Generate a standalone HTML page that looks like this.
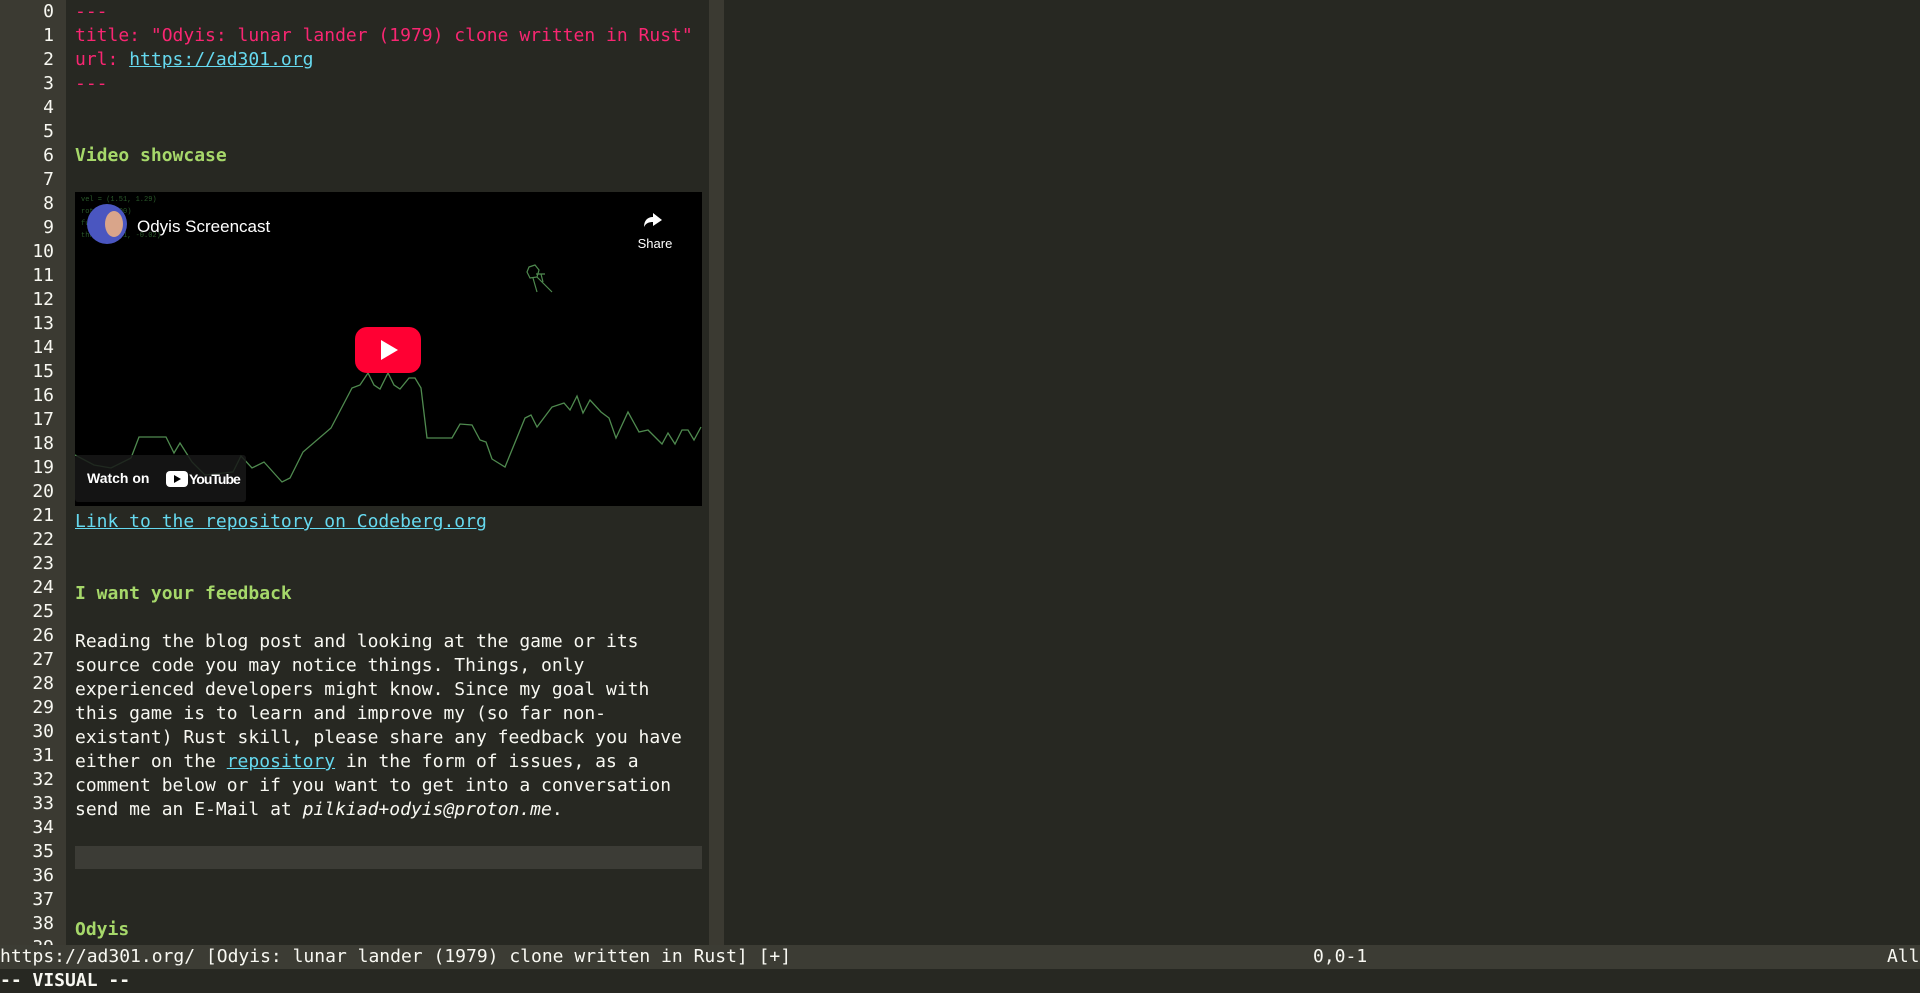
<!DOCTYPE html>
<html><head><meta charset="utf-8"><style>
html,body{margin:0;padding:0;width:1920px;height:993px;overflow:hidden;background:#272822;}
body{font-family:"DejaVu Sans Mono","Liberation Mono",monospace;font-size:18px;color:#f8f8f2;position:relative;}
#gut{position:absolute;left:0;top:0;width:66px;height:945px;background:#3b3a32;}
#sep{position:absolute;left:709px;top:0;width:15px;height:945px;background:#3b3a32;}
.n{position:absolute;left:0;width:54px;text-align:right;height:24px;line-height:24px;color:#f8f8f2;}
.l{position:absolute;left:75px;height:24px;line-height:24px;white-space:pre;}
.p{color:#f92672}.c{color:#66d9ef;text-decoration:underline}.g{color:#a6d86a;font-weight:bold}
#status{position:absolute;left:0;top:945px;width:1920px;height:24px;line-height:24px;background:#3c3c34;white-space:pre;}
#cmd{position:absolute;left:0;top:969px;height:24px;line-height:24px;font-weight:bold;white-space:pre;}
#vid{position:absolute;left:75px;top:192px;width:627px;height:314px;background:#000;overflow:hidden;}
#hl{position:absolute;left:75px;top:846px;width:627px;height:23px;background:#3c3c36;}
</style></head><body>
<div id="gut"></div><div id="sep"></div>
<div class="n" style="top:0">0</div><div class="n" style="top:24px">1</div><div class="n" style="top:48px">2</div><div class="n" style="top:72px">3</div><div class="n" style="top:96px">4</div><div class="n" style="top:120px">5</div><div class="n" style="top:144px">6</div><div class="n" style="top:168px">7</div><div class="n" style="top:192px">8</div><div class="n" style="top:216px">9</div><div class="n" style="top:240px">10</div><div class="n" style="top:264px">11</div><div class="n" style="top:288px">12</div><div class="n" style="top:312px">13</div><div class="n" style="top:336px">14</div><div class="n" style="top:360px">15</div><div class="n" style="top:384px">16</div><div class="n" style="top:408px">17</div><div class="n" style="top:432px">18</div><div class="n" style="top:456px">19</div><div class="n" style="top:480px">20</div><div class="n" style="top:504px">21</div><div class="n" style="top:528px">22</div><div class="n" style="top:552px">23</div><div class="n" style="top:576px">24</div><div class="n" style="top:600px">25</div><div class="n" style="top:624px">26</div><div class="n" style="top:648px">27</div><div class="n" style="top:672px">28</div><div class="n" style="top:696px">29</div><div class="n" style="top:720px">30</div><div class="n" style="top:744px">31</div><div class="n" style="top:768px">32</div><div class="n" style="top:792px">33</div><div class="n" style="top:816px">34</div><div class="n" style="top:840px">35</div><div class="n" style="top:864px">36</div><div class="n" style="top:888px">37</div><div class="n" style="top:912px">38</div><div class="n" style="top:936px">39</div>

<div class="l p" style="top:0">---</div>
<div class="l p" style="top:24px">title: "Odyis: lunar lander (1979) clone written in Rust"</div>
<div class="l p" style="top:48px">url: <span class="c">https://ad301.org</span></div>
<div class="l p" style="top:72px">---</div>
<div class="l g" style="top:144px">Video showcase</div>
<div id="vid"><svg width="627" height="314" viewBox="0 0 627 314" xmlns="http://www.w3.org/2000/svg">
<g font-family="Liberation Mono,monospace" font-size="7" fill="#2a5a2a"><text x="6" y="9">vel = (1.51, 1.29)</text><text x="6" y="21">rot = (0.00)</text><text x="6" y="33">fuel = 0.70</text><text x="6" y="45">thr = (0.01, -0.02)</text></g>
<polyline fill="none" stroke="#4f8a4f" stroke-width="1.3" points="0,263 19,273 36,276 56,266 64,245 91,245 99,261 105,251 117,270 130,283 158,280 166,264 177,276 189,270 207,290 215,286 228,260 256,236 277,196 285,193 293,181 299,193 305,197 313,181 319,193 325,197 334,186 340,186 346,196 352,246 377,246 385,232 397,233 405,248 411,250 417,267 430,275 450,226 456,223 462,235 477,215 489,211 495,218 502,204 508,221 515,208 526,220 534,226 541,246 553,220 564,240 573,238 587,252 593,241 600,252 607,238 613,238 619,248 626,235"/>
<g fill="none" stroke="#4f8a4f" stroke-width="1.2"><polygon points="454,75 460,73 464,78 462,85 455,86 452,80"/><path d="M458,86 L462,100 M462,85 L477,100 M461,82 L470,82 M466,82 L468,90"/></g>
<circle cx="32" cy="32" r="20" fill="#4a56c0"/><ellipse cx="39" cy="32" rx="9" ry="13" fill="#d9a58a"/>
<text x="62" y="40" font-family="Liberation Sans,sans-serif" font-size="17" fill="#fff">Odyis Screencast</text>
<path d="M587,28 L578,21 L578,25 C572,25 569,29 569,35 C571,31 574,30 578,30 L578,34 Z" fill="#fff"/>
<text x="580" y="56" font-family="Liberation Sans,sans-serif" font-size="13" fill="#fff" text-anchor="middle">Share</text>
<rect x="280" y="135" width="66" height="46" rx="12" fill="#ff0033"/><polygon points="306,148 306,168 323,158" fill="#fff"/>
<rect x="0" y="263" width="171" height="47" rx="3" fill="#181818" fill-opacity="0.85"/>
<text x="12" y="291" font-family="Liberation Sans,sans-serif" font-size="14" font-weight="bold" fill="#fff">Watch on</text>
<rect x="91" y="279" width="22" height="16" rx="4" fill="#fff"/><polygon points="99,283 99,291 106,287" fill="#000"/>
<text x="114" y="292" font-family="Liberation Sans,sans-serif" font-size="14" font-weight="bold" fill="#fff" letter-spacing="-1">YouTube</text>
</svg></div>
<div class="l" style="top:510px"><span class="c">Link to the repository on Codeberg.org</span></div>
<div class="l g" style="top:582px">I want your feedback</div>
<div class="l" style="top:630px">Reading the blog post and looking at the game or its</div>
<div class="l" style="top:654px">source code you may notice things. Things, only</div>
<div class="l" style="top:678px">experienced developers might know. Since my goal with</div>
<div class="l" style="top:702px">this game is to learn and improve my (so far non-</div>
<div class="l" style="top:726px">existant) Rust skill, please share any feedback you have</div>
<div class="l" style="top:750px">either on the <span class="c">repository</span> in the form of issues, as a</div>
<div class="l" style="top:774px">comment below or if you want to get into a conversation</div>
<div class="l" style="top:798px">send me an E-Mail at <i>pilkiad+odyis@proton.me</i>.</div>
<div id="hl"></div>
<div class="l g" style="top:918px">Odyis</div>
<div id="status">https://ad301.org/ [Odyis: lunar lander (1979) clone written in Rust] [+]<span style="position:absolute;left:1313px">0,0-1</span><span style="position:absolute;left:1887px">All</span></div>
<div id="cmd">-- VISUAL --</div>
</body></html>
